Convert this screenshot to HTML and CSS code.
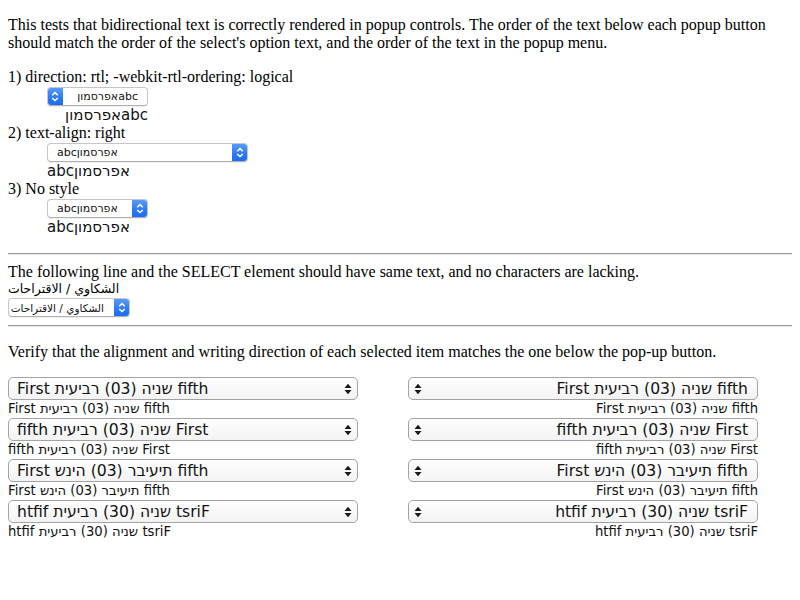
FILE: index.html
```html
<!DOCTYPE html>
<html>
<head>
<meta charset="utf-8">
<link rel="stylesheet" href="styles.css">
</head>
<body>
<p class="intro">This tests that bidirectional text is correctly rendered in popup controls. The order of the text below each popup button should match the order of the select's option text, and the order of the text in the popup menu.</p>

<div class="tests">
  <div class="label">1) direction: rtl; -webkit-rtl-ordering: logical</div>
  <div class="case case-rtl">
    <div class="pop pop-sm w100">
      <span class="stepper stepper-left"><svg width="16" height="17" viewBox="0 0 16 17"><path d="M5.2 7.2 L8 4.6 L10.8 7.2 M5.2 10 L8 12.6 L10.8 10" fill="none" stroke="#fff" stroke-width="1.5"/></svg></span>
      <span class="pop-text end"><bdo dir="ltr">ןומסרפאabc</bdo></span>
    </div>
    <div class="sample"><bdo dir="ltr">ןומסרפאabc</bdo></div>
  </div>

  <div class="label">2) text-align: right</div>
  <div class="case">
    <div class="pop pop-sm w200">
      <span class="pop-text">abcאפרסמון</span>
      <span class="stepper stepper-right"><svg width="16" height="17" viewBox="0 0 16 17"><path d="M5.2 7.2 L8 4.6 L10.8 7.2 M5.2 10 L8 12.6 L10.8 10" fill="none" stroke="#fff" stroke-width="1.5"/></svg></span>
    </div>
    <div class="sample">abcאפרסמון</div>
  </div>

  <div class="label">3) No style</div>
  <div class="case">
    <div class="pop pop-sm w100">
      <span class="pop-text">abcאפרסמון</span>
      <span class="stepper stepper-right"><svg width="16" height="17" viewBox="0 0 16 17"><path d="M5.2 7.2 L8 4.6 L10.8 7.2 M5.2 10 L8 12.6 L10.8 10" fill="none" stroke="#fff" stroke-width="1.5"/></svg></span>
    </div>
    <div class="sample">abcאפרסמון</div>
  </div>
</div>

<hr class="rule">

<div class="label">The following line and the SELECT element should have same text, and no characters are lacking.</div>
<div class="arabic">الشكاوي / الاقتراحات</div>
<div class="pop pop-sm pop-ar w-ar">
  <span class="pop-text end arabic-sm">الشكاوي / الاقتراحات</span>
  <span class="stepper stepper-right"><svg width="16" height="17" viewBox="0 0 16 17"><path d="M5.2 7.2 L8 4.6 L10.8 7.2 M5.2 10 L8 12.6 L10.8 10" fill="none" stroke="#fff" stroke-width="1.5"/></svg></span>
</div>

<hr class="rule">

<p class="verify">Verify that the alignment and writing direction of each selected item matches the one below the pop-up button.</p>

<div class="grid">
  <div class="cell">
    <div class="pop pop-lg">
      <span class="pop-text">First שניה (03) רביעית fifth</span>
      <span class="arrows"><svg width="8" height="12" viewBox="0 0 8 12"><path d="M0.5 5 L4 0.8 L7.5 5 Z M0.5 7 L4 11.2 L7.5 7 Z" fill="#1a1a1a"/></svg></span>
    </div>
    <div class="caption">First שניה (03) רביעית fifth</div>
  </div>
  <div class="cell cell-right">
    <div class="pop pop-lg">
      <span class="arrows"><svg width="8" height="12" viewBox="0 0 8 12"><path d="M0.5 5 L4 0.8 L7.5 5 Z M0.5 7 L4 11.2 L7.5 7 Z" fill="#1a1a1a"/></svg></span>
      <span class="pop-text end">First שניה (03) רביעית fifth</span>
    </div>
    <div class="caption">First שניה (03) רביעית fifth</div>
  </div>

  <div class="cell">
    <div class="pop pop-lg">
      <span class="pop-text">fifth שניה (03) רביעית First</span>
      <span class="arrows"><svg width="8" height="12" viewBox="0 0 8 12"><path d="M0.5 5 L4 0.8 L7.5 5 Z M0.5 7 L4 11.2 L7.5 7 Z" fill="#1a1a1a"/></svg></span>
    </div>
    <div class="caption">fifth שניה (03) רביעית First</div>
  </div>
  <div class="cell cell-right">
    <div class="pop pop-lg">
      <span class="arrows"><svg width="8" height="12" viewBox="0 0 8 12"><path d="M0.5 5 L4 0.8 L7.5 5 Z M0.5 7 L4 11.2 L7.5 7 Z" fill="#1a1a1a"/></svg></span>
      <span class="pop-text end">fifth שניה (03) רביעית First</span>
    </div>
    <div class="caption">fifth שניה (03) רביעית First</div>
  </div>

  <div class="cell">
    <div class="pop pop-lg">
      <span class="pop-text"><bdo dir="ltr">First שניה (03) רביעית fifth</bdo></span>
      <span class="arrows"><svg width="8" height="12" viewBox="0 0 8 12"><path d="M0.5 5 L4 0.8 L7.5 5 Z M0.5 7 L4 11.2 L7.5 7 Z" fill="#1a1a1a"/></svg></span>
    </div>
    <div class="caption"><bdo dir="ltr">First שניה (03) רביעית fifth</bdo></div>
  </div>
  <div class="cell cell-right">
    <div class="pop pop-lg">
      <span class="arrows"><svg width="8" height="12" viewBox="0 0 8 12"><path d="M0.5 5 L4 0.8 L7.5 5 Z M0.5 7 L4 11.2 L7.5 7 Z" fill="#1a1a1a"/></svg></span>
      <span class="pop-text end"><bdo dir="ltr">First שניה (03) רביעית fifth</bdo></span>
    </div>
    <div class="caption"><bdo dir="ltr">First שניה (03) רביעית fifth</bdo></div>
  </div>

  <div class="cell">
    <div class="pop pop-lg">
      <span class="pop-text"><bdo dir="rtl">First שניה (03) רביעית fifth</bdo></span>
      <span class="arrows"><svg width="8" height="12" viewBox="0 0 8 12"><path d="M0.5 5 L4 0.8 L7.5 5 Z M0.5 7 L4 11.2 L7.5 7 Z" fill="#1a1a1a"/></svg></span>
    </div>
    <div class="caption"><bdo dir="rtl">First שניה (03) רביעית fifth</bdo></div>
  </div>
  <div class="cell cell-right">
    <div class="pop pop-lg">
      <span class="arrows"><svg width="8" height="12" viewBox="0 0 8 12"><path d="M0.5 5 L4 0.8 L7.5 5 Z M0.5 7 L4 11.2 L7.5 7 Z" fill="#1a1a1a"/></svg></span>
      <span class="pop-text end"><bdo dir="rtl">First שניה (03) רביעית fifth</bdo></span>
    </div>
    <div class="caption"><bdo dir="rtl">First שניה (03) רביעית fifth</bdo></div>
  </div>
</div>
</body>
</html>
```
FILE: styles.css
```css
html, body {
  background: #fff;
}
body {
  margin: 0;
  padding: 16px 8px 8px;
  color: #000;
  font-family: "Liberation Serif", "Times New Roman", serif;
  font-size: 16px;
  line-height: 18px;
}
.intro {
  margin: 0 0 16px;
}
.verify {
  margin: 16px 0;
}
.label {
  line-height: 18px;
}
.tests {
  margin-bottom: 17px;
}
.case {
  margin-left: 39px;
  display: flex;
  flex-direction: column;
  align-items: flex-start;
}
.case-rtl {
  display: inline-flex;
  align-items: flex-end;
}
.sample {
  font-family: "DejaVu Sans", "Noto Sans", sans-serif;
  font-size: 15px;
  line-height: 18px;
  color: #111;
}
.rule {
  border: 0;
  border-top: 1px solid #9a9a9a;
  border-bottom: 1px solid #e6e6e6;
  height: 0;
  margin: 8px 0;
}
.arabic {
  font-family: "DejaVu Sans", sans-serif;
  font-size: 12.5px;
  line-height: 16px;
}
.pop {
  display: flex;
  align-items: center;
  box-sizing: border-box;
  background: #fff;
  overflow: hidden;
  font-family: "DejaVu Sans", "Noto Sans", sans-serif;
  color: #111;
}
.pop-sm {
  height: 19px;
  margin-top: 1px;
  border: 1px solid #c6c6c6;
  border-bottom-color: #b0b0b0;
  border-radius: 4px;
  font-size: 11px;
  box-shadow: 0 1px 0 rgba(0, 0, 0, 0.06);
}
.pop-ar {
  height: 19px;
}
.w100 { width: 101px; }
.w200 { width: 201px; }
.w-ar { width: 122px; }
.pop-text {
  flex: 1;
  display: flex;
  padding: 0 9px;
  white-space: nowrap;
  overflow: hidden;
}
.pop-text.end {
  justify-content: flex-end;
}
.arabic-sm {
  font-size: 10.5px;
  padding-right: 10px;
}
.stepper {
  width: 16px;
  align-self: stretch;
  display: flex;
  align-items: center;
  justify-content: center;
  background: linear-gradient(#5c9ef9, #2b78f3 60%, #1b6af0);
}
.stepper-left {
  margin: -1px 0 -1px -1px;
}
.stepper-right {
  margin: -1px -1px -1px 0;
}
.grid {
  display: grid;
  grid-template-columns: 350px 350px;
  column-gap: 50px;
}
.cell {
  display: flex;
  flex-direction: column;
}
.pop-lg {
  height: 23px;
  border: 1px solid #a3a3a3;
  border-radius: 5px;
  background: linear-gradient(#ffffff, #f3f3f3);
  font-size: 15.6px;
}
.pop-lg .pop-text {
  padding: 0 8px;
}
.pop-lg .pop-text.end {
  padding: 0 9px;
}
.arrows {
  display: flex;
  align-items: center;
  padding: 0 5px;
}
.caption {
  font-family: "DejaVu Sans", "Noto Sans", sans-serif;
  font-size: 13.2px;
  line-height: 18px;
  color: #111;
}
.cell-right .caption {
  text-align: right;
}
```
